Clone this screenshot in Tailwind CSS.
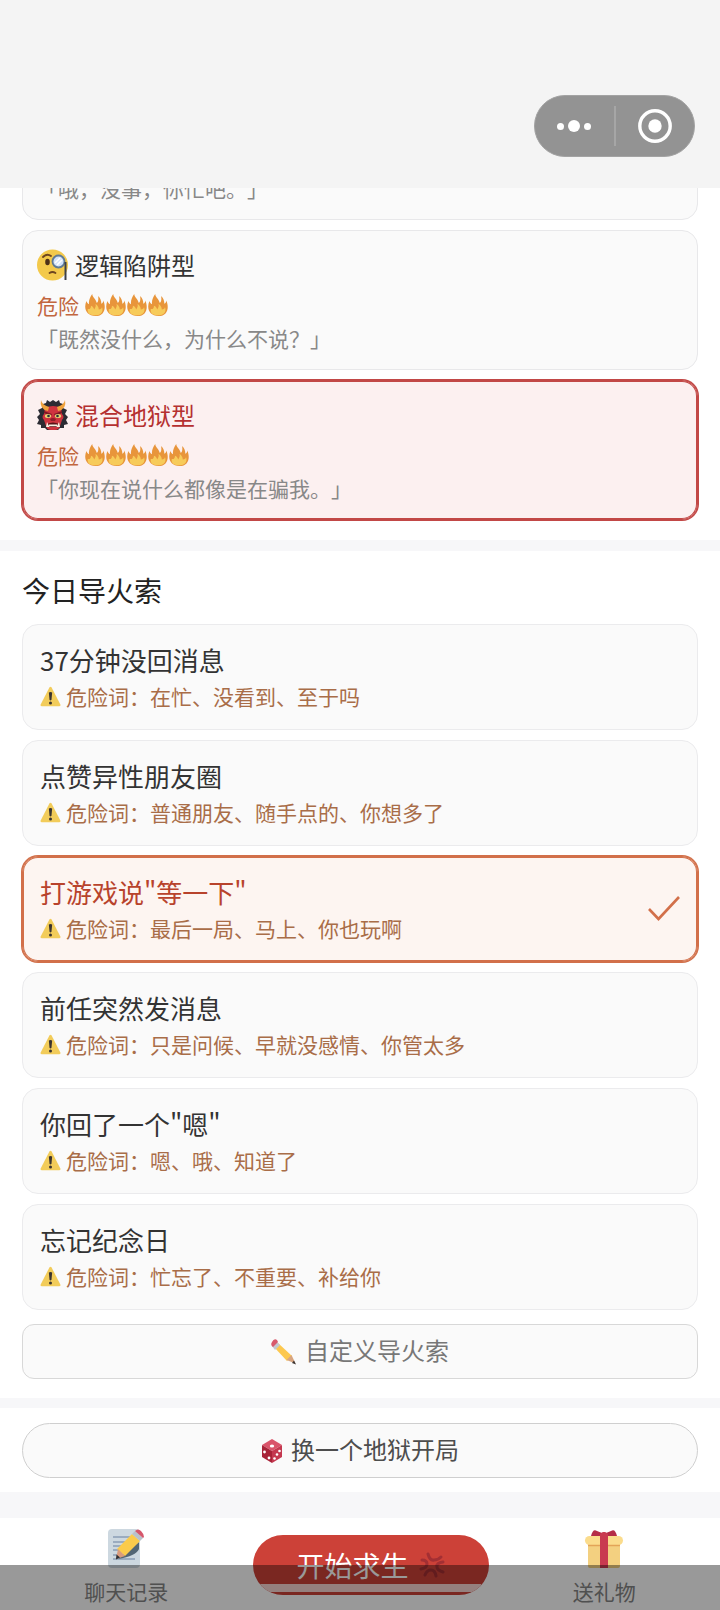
<!DOCTYPE html>
<html lang="zh-CN">
  <head>
    <meta charset="UTF-8" />
    <meta name="viewport" content="width=device-width, initial-scale=1.0" />
    <title>今日导火索</title>
    <script src="https://cdn.jsdelivr.net/npm/@tailwindcss/browser@4"></script>
    <style>
      body {
        font-family: "Noto Sans CJK SC", sans-serif;
        text-spacing-trim: space-all;
      }
    </style>
  </head>
  <body class="bg-[#f7f7f9] text-[#333333]">
    <!-- Icon shapes -->
    <svg class="hidden">
      <symbol id="fire" viewBox="0 0 32 34">
        <path fill="#e8953b" d="M2 11c1 3 2 4 4 5C5 10 8 4 11 0c0 5 6 8 7 14c2-2 3-5 2-11c4 3 5 8 5 12c2-1 3-2 3-5c5 11 2 24-12 24S-3 22 2 11z" />
        <path fill="#f7cb5a" d="M4 23c3 1 5-1 5-5c3 1 4 3 5 6c2-3 3-6 2-9c4 3 5 6 5 9c3 0 5-2 5-4c3 7-2 13-10 13S3 30 4 23z" />
      </symbol>
      <symbol id="warning" viewBox="0 0 32 32">
        <path fill="#f2cc5a" d="M14.500 2q1.500-2 3 0L31 28q1 3-2 3H3q-3 0-2-3z" />
        <path fill="#3a3330" d="M13.500 10q2.500-2 5 0l-1 11q-1.500 2-3 0z" />
        <circle cx="16" cy="26" r="2.300" fill="#3a3330" />
      </symbol>
    </svg>

    <!-- Header -->
    <header class="relative z-10 flex h-[188px] items-start justify-end bg-[#f4f4f4] pt-[95px] pr-[25px]">
      <div class="flex h-[62px] w-[161px] items-center rounded-full border border-[#a3a3a3] bg-[#939393]">
        <button type="button" aria-label="更多" class="flex flex-1 items-center justify-center gap-1">
          <span class="size-[7px] rounded-full bg-white"></span>
          <span class="size-3 rounded-full bg-white"></span>
          <span class="size-[7px] rounded-full bg-white"></span>
        </button>
        <span class="h-10 w-[2px] bg-[#a6a6a6]"></span>
        <button type="button" aria-label="关闭" class="flex flex-1 items-center justify-center">
          <svg class="size-[34px]" viewBox="0 0 34 34">
            <circle cx="17" cy="17" r="15.200" fill="none" stroke="#fff" stroke-width="3.400" />
            <circle cx="17" cy="17" r="6.700" fill="#fff" />
          </svg>
        </button>
      </div>
    </header>

    <main>
      <!-- Persona -->
      <section class="-mt-7 flex flex-col gap-[10px] bg-white px-[22px] pb-5">
        <button type="button" class="rounded-2xl border border-[#e8e8ea] bg-[#fafafa] px-[14px] pt-[13px] pb-[17px] text-left">
          <span class="block text-[21px] leading-7 text-[#888888]">「哦，没事，你忙吧。」</span>
        </button>

        <button type="button" class="rounded-2xl border border-[#e8e8ea] bg-[#fafafa] px-[14px] pt-4 pb-[17px] text-left">
          <span class="flex items-center gap-1.5 text-[24px] leading-9">
            <svg class="size-8" viewBox="0 0 32 32">
              <circle cx="15.500" cy="16" r="15.500" fill="#f3c94b" />
              <path d="M6 8q4-4 8-1" fill="none" stroke="#6d4520" stroke-width="1.800" stroke-linecap="round" />
              <ellipse cx="10.500" cy="13" rx="2.300" ry="3.300" fill="#4d3018" />
              <path d="M12.500 24q3-2 6 0" fill="none" stroke="#6d4520" stroke-width="1.800" stroke-linecap="round" />
              <circle cx="21.500" cy="12.500" r="6" fill="#d3e3fa" stroke="#5f7a95" stroke-width="1.800" />
              <path d="M18 14l5-5M20 16l5-5" stroke="#fff" stroke-width="1.500" />
              <path d="M28.500 13v18" stroke="#3c4048" stroke-width="2" />
            </svg>
            逻辑陷阱型
          </span>
          <span class="mt-2 flex items-center text-[21px] leading-7 text-[#c2663f]">
            <span class="mr-1.5">危险</span>
            <svg class="h-[22px] w-[21px]"><use href="#fire" /></svg>
            <svg class="h-[22px] w-[21px]"><use href="#fire" /></svg>
            <svg class="h-[22px] w-[21px]"><use href="#fire" /></svg>
            <svg class="h-[22px] w-[21px]"><use href="#fire" /></svg>
          </span>
          <span class="mt-[5px] block text-[21px] leading-7 text-[#888888]">「既然没什么，为什么不说？」</span>
        </button>

        <button type="button" aria-pressed="true" class="rounded-2xl border border-[#c24846] bg-[#fcf0f0] px-[14px] pt-4 pb-[17px] text-left ring-1 ring-[#c24846] inset-ring-1 inset-ring-[#c24846]">
          <span class="flex items-center gap-1.5 text-[24px] leading-9 text-[#b53030]">
            <svg class="size-8" viewBox="0 0 32 32">
              <path fill="#2b2b33" d="M6 5l3-1 1-3 3 2 3-2 3 2 3-2 1 3 3 1 0 4 4 2-2 4 3 3-2 3 2 4-4 1 0 3-4 0-2 2H10l-2-2-4 0 0-3-4-1 2-4-2-3 3-3-2-4 4-2z" />
              <path fill="#cf333f" d="M8 9q8-4 16 0l1 6q3 3 0 6l-2 6q-1 4-5 4h-4q-4 0-5-4l-2-6q-3-3 0-6z" />
              <path fill="#f0a23c" d="M4 1q1 5 8 7l-1 4Q2 10 4 1zM28 1q-1 5-8 7l1 4q9-2 7-11z" />
              <path fill="#7d1a24" d="M7 12l8 3-1 2-7-3zM25 12l-8 3 1 2 7-3z" />
              <ellipse cx="11" cy="17" rx="3.200" ry="2" fill="#e8d070" />
              <ellipse cx="21" cy="17" rx="3.200" ry="2" fill="#e8d070" />
              <circle cx="11.500" cy="17" r="1.300" fill="#24303a" />
              <circle cx="20.500" cy="17" r="1.300" fill="#24303a" />
              <path fill="#8d1f2a" d="M13 20q3-2 6 0l-1 2h-4z" />
              <path fill="#5a1219" d="M10 25q6-3 12 0l-1 3H11z" />
              <path fill="#f7f0e4" d="M12 25.500h8v1.800h-8zM9 28l1-5 2.500 5zM23 28l-1-5-2.500 5z" />
            </svg>
            混合地狱型
          </span>
          <span class="mt-2 flex items-center text-[21px] leading-7 text-[#c2663f]">
            <span class="mr-1.5">危险</span>
            <svg class="h-[22px] w-[21px]"><use href="#fire" /></svg>
            <svg class="h-[22px] w-[21px]"><use href="#fire" /></svg>
            <svg class="h-[22px] w-[21px]"><use href="#fire" /></svg>
            <svg class="h-[22px] w-[21px]"><use href="#fire" /></svg>
            <svg class="h-[22px] w-[21px]"><use href="#fire" /></svg>
          </span>
          <span class="mt-[5px] block text-[21px] leading-7 text-[#888888]">「你现在说什么都像是在骗我。」</span>
        </button>
      </section>

      <!-- Triggers -->
      <section class="mt-[11px] bg-white px-[22px] pt-[19px] pb-[19px]">
        <h2 class="mb-[14px] text-[28px] leading-10 text-[#222222]">今日导火索</h2>

        <div class="flex flex-col gap-[10px]">
          <button type="button" class="rounded-2xl border border-[#ebebed] bg-[#fafafa] px-[17px] pt-[17px] pb-[19px] text-left">
            <span class="block text-[26px] leading-9">37分钟没回消息</span>
            <span class="mt-1 flex items-center gap-[5px] text-[21px] leading-7 text-[#a96d48]">
              <svg class="size-[21px]"><use href="#warning" /></svg>
              危险词：在忙、没看到、至于吗
            </span>
          </button>

          <button type="button" class="rounded-2xl border border-[#ebebed] bg-[#fafafa] px-[17px] pt-[17px] pb-[19px] text-left">
            <span class="block text-[26px] leading-9">点赞异性朋友圈</span>
            <span class="mt-1 flex items-center gap-[5px] text-[21px] leading-7 text-[#a96d48]">
              <svg class="size-[21px]"><use href="#warning" /></svg>
              危险词：普通朋友、随手点的、你想多了
            </span>
          </button>

          <button type="button" aria-pressed="true" class="flex items-center justify-between rounded-2xl border border-[#d2704a] bg-[#fdf5f1] px-[17px] pt-[17px] pb-[19px] text-left ring-1 ring-[#d2704a] inset-ring-1 inset-ring-[#d2704a]">
            <span>
              <span class="block text-[26px] leading-9 text-[#b8432c]">打游戏说"等一下"</span>
              <span class="mt-1 flex items-center gap-[5px] text-[21px] leading-7 text-[#a96d48]">
                <svg class="size-[21px]"><use href="#warning" /></svg>
                危险词：最后一局、马上、你也玩啊
              </span>
            </span>
            <svg class="h-[26px] w-8" viewBox="0 0 32 26" fill="none" stroke="#d2704a" stroke-width="2.600">
              <path d="M1 14l9.500 10L31 2" />
            </svg>
          </button>

          <button type="button" class="rounded-2xl border border-[#ebebed] bg-[#fafafa] px-[17px] pt-[17px] pb-[19px] text-left">
            <span class="block text-[26px] leading-9">前任突然发消息</span>
            <span class="mt-1 flex items-center gap-[5px] text-[21px] leading-7 text-[#a96d48]">
              <svg class="size-[21px]"><use href="#warning" /></svg>
              危险词：只是问候、早就没感情、你管太多
            </span>
          </button>

          <button type="button" class="rounded-2xl border border-[#ebebed] bg-[#fafafa] px-[17px] pt-[17px] pb-[19px] text-left">
            <span class="block text-[26px] leading-9">你回了一个"嗯"</span>
            <span class="mt-1 flex items-center gap-[5px] text-[21px] leading-7 text-[#a96d48]">
              <svg class="size-[21px]"><use href="#warning" /></svg>
              危险词：嗯、哦、知道了
            </span>
          </button>

          <button type="button" class="rounded-2xl border border-[#ebebed] bg-[#fafafa] px-[17px] pt-[17px] pb-[19px] text-left">
            <span class="block text-[26px] leading-9">忘记纪念日</span>
            <span class="mt-1 flex items-center gap-[5px] text-[21px] leading-7 text-[#a96d48]">
              <svg class="size-[21px]"><use href="#warning" /></svg>
              危险词：忙忘了、不重要、补给你
            </span>
          </button>
        </div>

        <button type="button" class="mt-[14px] flex h-[55px] w-full items-center justify-center gap-2 rounded-xl border border-[#d8d8d8] bg-[#fafafa] text-[24px] text-[#777777]">
          <svg class="size-[26px]" viewBox="0 0 26 26">
            <path fill="#fcc84f" d="M7 4l14 13-5 5L3 8z" />
            <path fill="#c4c8cf" d="M5 2l4 4-5 5-3-4z" />
            <path fill="#d8596b" d="M1 3q2-4 5-2l1 2-5 5q-3-2-1-5z" />
            <path fill="#d8a580" d="M20.500 16l4 8.500-9-3.500z" />
            <path fill="#3a3330" d="M23 21.500l2 4-4-1.500z" />
          </svg>
          <span class="pb-1">自定义导火索</span>
        </button>
      </section>

      <!-- Reroll -->
      <section class="mt-[10px] bg-white px-[22px] pt-[15px] pb-[14px]">
        <button type="button" class="flex h-[55px] w-full items-center justify-center gap-2 rounded-full border border-[#cfcfcf] bg-[#fafafa] text-[24px] text-[#4d4d4d]">
          <svg class="h-[26px] w-[22px]" viewBox="0 0 22 26">
            <path fill="#d9546a" d="M11 1l10 6-10 6L1 7z" />
            <path fill="#a82338" d="M1 7l10 6v12L1 19z" />
            <path fill="#c4384f" d="M21 7l-10 6v12l10-6z" />
            <g fill="#fff">
              <ellipse cx="11" cy="8" rx="2.200" ry="1.500" />
              <circle cx="3.500" cy="14" r="1.400" />
              <circle cx="8" cy="20" r="1.400" />
              <circle cx="18.500" cy="13" r="1.300" />
              <circle cx="16" cy="16.500" r="1.300" />
              <circle cx="13.500" cy="20.500" r="1.300" />
            </g>
          </svg>
          <span class="pb-1">换一个地狱开局</span>
        </button>
      </section>
    </main>

    <!-- Bottom bar -->
    <footer class="relative mt-[26px] flex items-start bg-white pt-[10px] pb-[5px]">
      <button type="button" class="flex flex-auto flex-col items-center gap-[9px] text-[21px] leading-7 text-[#858585]">
        <svg class="size-10" viewBox="0 0 40 40">
          <rect x="2" y="1" width="32" height="39" rx="4" fill="#cdd8e0" />
          <path d="M7 9h17M7 14h17M7 18h13M7 22h9M7 27h6M7 31h22" stroke="#8a9db5" stroke-width="1.600" />
          <path fill="#536674" d="M33 14v7q-3 7-21 10z" />
          <path fill="#fbcb4b" d="M26 6l8 7-15 15-8-7z" />
          <path fill="#b9c2ca" d="M26 6l3-3 8 7-3 3z" />
          <path fill="#d5566b" d="M29 3q3-3 6 0t3 6l-1 1z" />
          <path fill="#d99b7d" d="M12 21l7 7-9 3z" />
          <path fill="#2e2f33" d="M10.500 26.500l3.500 3-4 2z" />
        </svg>
        聊天记录
      </button>

      <button type="button" class="relative mt-[7px] flex h-[60px] w-[236px] flex-none items-center justify-center gap-2.5 overflow-hidden rounded-full bg-[#cc4138] text-[28px] text-white">
        开始求生
        <svg class="size-[26px]" viewBox="0 0 26 26" fill="none" stroke="#a32f33" stroke-width="3" stroke-linecap="round">
          <path d="M9 2q2 7 6 6 4 0 7-3" />
          <path d="M24 10q-7 1-6 5 0 3 6 5" />
          <path d="M17 24q-1-6-5-6-4 0-6 5" />
          <path d="M2 17q6-1 6-5 0-4-5-4" />
        </svg>
        <!-- Gesture line -->
        <span class="absolute right-2 bottom-[3px] left-0 h-2 bg-[#f8d5d2]"></span>
      </button>

      <button type="button" class="flex flex-auto flex-col items-center gap-[9px] text-[21px] leading-7 text-[#858585]">
        <svg class="size-10" viewBox="0 0 40 40">
          <path fill="#b52d48" d="M7 8Q9 0 13 3l5 2q2-2 4 0l5-2q4-3 6 5z" />
          <rect x="4" y="12" width="32" height="28" rx="2" fill="#f3d080" />
          <rect x="1" y="8" width="38" height="9" rx="4.500" fill="#fbdc8c" />
          <path d="M4 17.500h32" stroke="#e3a457" stroke-width="1.500" />
          <path fill="#c93a50" d="M16 6q4-4 8 0v34h-8z" />
        </svg>
        送礼物
      </button>

      <!-- System navigation shade -->
      <div class="pointer-events-none absolute inset-x-0 bottom-0 h-[45px] bg-black/40"></div>
    </footer>
  </body>
</html>
